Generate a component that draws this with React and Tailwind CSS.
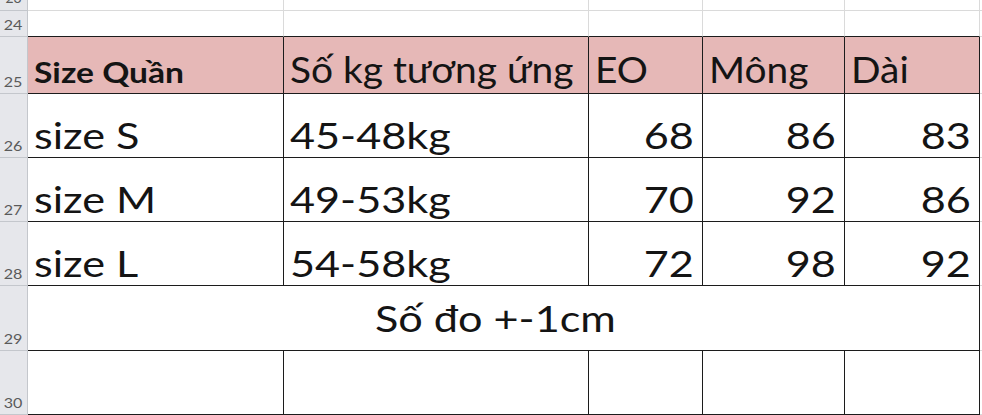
const COLS = 'grid grid-cols-[28px_256px_305px_114px_142px_135px_1fr]'
const FONT = { fontFamily: 'Lato, "Liberation Sans", sans-serif' }

function RowNum({ n }) {
  return (
    <div className="flex items-end justify-center pb-[4px] bg-[#e6e7eb] border-r border-b border-[#c4c7cc] text-[14px] leading-none text-[#5a5a5a] overflow-hidden">
      <span className="inline-block scale-x-[1.15]">{n}</span>
    </div>
  )
}

function Wide({ children, origin = 'origin-left', narrow }) {
  return <span className={`inline-block ${narrow ? 'scale-x-[1.08]' : 'scale-x-[1.2]'} ${origin}`}>{children}</span>
}

function Cell({ children, right, pink, className = '' }) {
  return (
    <div
      className={`flex items-end ${right ? 'justify-end pr-[8px]' : 'justify-start pl-[6px]'} border-r border-b border-[#1c1c1c] text-[36px] leading-none text-[#141414] whitespace-nowrap ${pink ? 'bg-[#e6b8b7] pb-[6px]' : 'bg-white pb-[4px]'} ${className}`}
    >
      <Wide origin={right ? 'origin-right' : 'origin-left'} narrow={pink}>{children}</Wide>
    </div>
  )
}

function Blank({ dark }) {
  return <div className={`border-r border-b ${dark ? 'border-b-[#1c1c1c]' : 'border-b-[#dadada]'} border-r-[#dadada]`} />
}

const data = [
  ['size S', '45-48kg', 68, 86, 83],
  ['size M', '49-53kg', 70, 92, 86],
  ['size L', '54-58kg', 72, 98, 92],
]

export default function App() {
  return (
    <div className="w-[982px] h-[415px] overflow-hidden bg-white" style={FONT}>
      {/* row 23 (cut off at the top) */}
      <div className={`${COLS} h-[11px]`}>
        <div className="relative bg-[#e6e7eb] border-r border-b border-[#c4c7cc] overflow-hidden">
          <span className="absolute left-0 right-0 bottom-[5px] text-center text-[14px] leading-none text-[#5a5a5a]">23</span>
        </div>
        <Blank /><Blank /><Blank /><Blank /><Blank />
        <div className="border-b border-[#dadada]" />
      </div>

      {/* row 24 */}
      <div className={`${COLS} h-[26px]`}>
        <RowNum n={24} />
        <Blank dark /><Blank dark /><Blank dark /><Blank dark /><Blank dark />
        <div className="border-b border-[#dadada]" />
      </div>

      {/* row 25 header */}
      <div className={`${COLS} h-[57px]`}>
        <RowNum n={25} />
        <div className="flex items-end pl-[6px] pb-[7px] bg-[#e6b8b7] border-r border-b border-[#1c1c1c] text-[28px] font-bold leading-none text-[#141414] whitespace-nowrap">
          <Wide>Size Quần</Wide>
        </div>
        <Cell pink>Số kg tương ứng</Cell>
        <Cell pink>EO</Cell>
        <Cell pink>Mông</Cell>
        <Cell pink>Dài</Cell>
        <div className="border-b border-[#dadada]" />
      </div>

      {data.map((r, i) => (
        <div key={i} className={`${COLS} h-[64px]`}>
          <RowNum n={26 + i} />
          <Cell>{r[0]}</Cell>
          <Cell>{r[1]}</Cell>
          <Cell right>{r[2]}</Cell>
          <Cell right>{r[3]}</Cell>
          <Cell right>{r[4]}</Cell>
          <div className="border-b border-[#dadada]" />
        </div>
      ))}

      {/* row 29 merged */}
      <div className={`${COLS} h-[65px]`}>
        <RowNum n={29} />
        <div className="col-span-5 flex items-end justify-center pr-[16px] pb-[14px] border-r border-b border-[#1c1c1c] text-[36px] leading-none text-[#141414] whitespace-nowrap">
          <Wide origin="origin-center">Số đo +-1cm</Wide>
        </div>
        <div className="border-b border-[#dadada]" />
      </div>

      {/* row 30 */}
      <div className={`${COLS} h-[64px]`}>
        <RowNum n={30} />
        <div className="border-r border-b border-[#1c1c1c]" />
        <div className="border-r border-b border-[#1c1c1c]" />
        <div className="border-r border-b border-[#1c1c1c]" />
        <div className="border-r border-b border-[#1c1c1c]" />
        <div className="border-r border-b border-[#1c1c1c]" />
        <div className="border-b border-[#dadada]" />
      </div>
    </div>
  )
}
